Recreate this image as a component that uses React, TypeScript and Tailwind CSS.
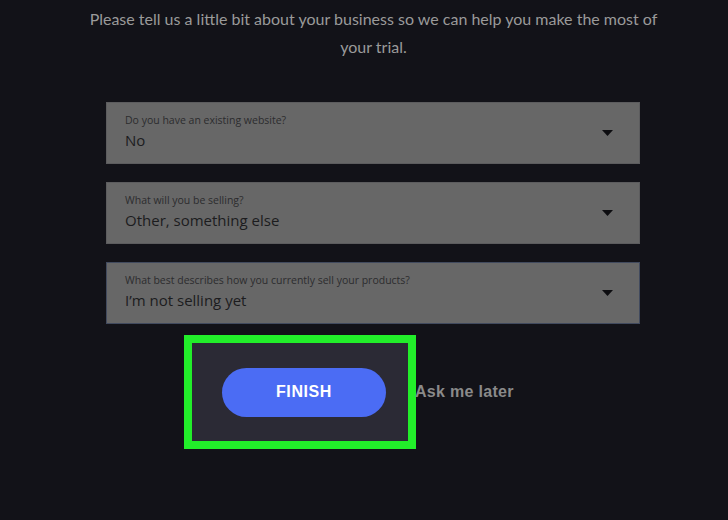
import React from "react";

function Caret() {
  return (
    <svg width="11" height="6" viewBox="0 0 11 6" className="block">
      <path d="M0 0 L11 0 L5.5 6 Z" fill="#0d0d10" />
    </svg>
  );
}

function Field({ label, value, highlight }: { label: string; value: string; highlight?: boolean }) {
  return (
    <div
      className={
        "w-[534px] h-[62px] bg-[#676767] flex items-center pl-[18px] pr-[26px] border " +
        (highlight ? "border-[#414a5e]" : "border-[#5c5c5e]")
      }
    >
      <div className="flex-1 flex flex-col mt-[-3px]">
        <span className="text-[10.5px] leading-[14px] text-[#2c2c2e]">{label}</span>
        <span className="text-[15px] leading-[20px] text-[#1c1c1e] mt-[3px]">{value}</span>
      </div>
      <Caret />
    </div>
  );
}

export default function App() {
  return (
    <div
      className="w-[728px] h-[520px] bg-[#121218] overflow-hidden flex flex-col"
      style={{ fontFamily: '"Open Sans", "Noto Sans", sans-serif' }}
    >
      <p
        className="pt-[5px] text-center text-[16px] leading-[28px] text-[#9a9a9a] pl-[86px] pr-[67px]"
        style={{ fontFamily: 'Lato, "Open Sans", sans-serif' }}
      >
        Please tell us a little bit about your business so we can help you make the most of your trial.
      </p>
      <div className="mt-[41px] ml-[106px] flex flex-col gap-[18px]">
        <Field label="Do you have an existing website?" value="No" />
        <Field label="What will you be selling?" value="Other, something else" />
        <Field label="What best describes how you currently sell your products?" value="I’m not selling yet" highlight />
      </div>
      <div className="mt-[11px] ml-[184px] flex items-center">
        <div className="w-[232px] h-[114px] border-[8px] border-[#22ee2a] bg-[#2b2a35] flex items-center pl-[30px]">
          <div
            className="w-[164px] h-[49px] rounded-full bg-[#4b6cf4] flex items-center justify-center text-white text-[16px] font-bold tracking-[0.6px]"
            style={{ fontFamily: '"Liberation Sans", Arial, sans-serif' }}
          >
            FINISH
          </div>
        </div>
        <span
          className="ml-[-1px] text-[16px] font-bold text-[#8a8a8a] tracking-[0.3px]"
          style={{ fontFamily: '"Liberation Sans", Arial, sans-serif' }}
        >
          Ask me later
        </span>
      </div>
    </div>
  );
}
